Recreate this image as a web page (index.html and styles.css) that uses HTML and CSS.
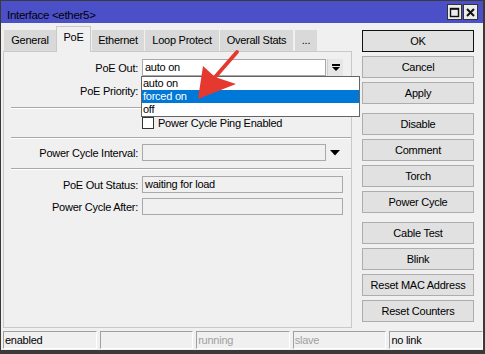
FILE: index.html
```html
<!DOCTYPE html>
<html>
<head>
<meta charset="utf-8">
<link rel="stylesheet" href="styles.css">
</head>
<body>
<div class="win">
  <div class="titlebar">
    <span class="title">Interface &lt;ether5&gt;</span>
    <div class="tbtns">
      <span class="tbtn"><svg width="11" height="11" viewBox="0 0 11 11"><rect x="1.5" y="1.5" width="8" height="8" fill="none" stroke="#111" stroke-width="1.4"/><line x1="1.5" y1="2" x2="9.5" y2="2" stroke="#111" stroke-width="1.6"/></svg></span>
      <span class="tbtn"><svg width="11" height="11" viewBox="0 0 11 11"><path d="M2 2 L9 9 M9 2 L2 9" stroke="#111" stroke-width="2"/></svg></span>
    </div>
  </div>
  <div class="main">
    <div class="left">
      <div class="tabs">
        <div class="tab t1">General</div>
        <div class="tab t2 active">PoE</div>
        <div class="tab t3">Ethernet</div>
        <div class="tab t4">Loop Protect</div>
        <div class="tab t5">Overall Stats</div>
        <div class="tab t6">...</div>
      </div>
      <div class="panel">
        <div class="row r-out">
          <span class="lbl">PoE Out:</span>
          <div class="field white">auto on</div>
          <div class="ddbtn"><svg width="8" height="7" viewBox="0 0 8 7"><rect x="0" y="0" width="8" height="2" fill="#000"/><path d="M0 3 L8 3 L4 7 Z" fill="#000"/></svg></div>
        </div>
        <div class="row r-prio">
          <span class="lbl">PoE Priority:</span>
          <div class="field wide white"></div>
        </div>
        <div class="sep s1"></div>
        <div class="row r-chk">
          <span class="lbl"></span>
          <span class="chk"></span>
          <span>Power Cycle Ping Enabled</span>
        </div>
        <div class="sep s2"></div>
        <div class="row r-int">
          <span class="lbl">Power Cycle Interval:</span>
          <div class="field ro"></div>
          <div class="ddarrow"><svg width="10" height="6" viewBox="0 0 10 6"><path d="M0 0 L10 0 L5 5.5 Z" fill="#000"/></svg></div>
        </div>
        <div class="sep s3"></div>
        <div class="row r-status">
          <span class="lbl">PoE Out Status:</span>
          <div class="field wide ro">waiting for load</div>
        </div>
        <div class="row r-after">
          <span class="lbl">Power Cycle After:</span>
          <div class="field wide ro"></div>
        </div>
        <div class="ddlist">
          <div class="opt">auto on</div>
          <div class="opt sel">forced on</div>
          <div class="opt">off</div>
        </div>
      </div>
    </div>
    <div class="buttons">
      <div class="btn def">OK</div>
      <div class="btn">Cancel</div>
      <div class="btn">Apply</div>
      <div class="btn grp">Disable</div>
      <div class="btn">Comment</div>
      <div class="btn">Torch</div>
      <div class="btn">Power Cycle</div>
      <div class="btn grp">Cable Test</div>
      <div class="btn">Blink</div>
      <div class="btn">Reset MAC Address</div>
      <div class="btn">Reset Counters</div>
    </div>
  </div>
  <div class="status">
    <div class="seg">enabled</div>
    <div class="seg"></div>
    <div class="seg dim">running</div>
    <div class="seg dim">slave</div>
    <div class="seg">no link</div>
  </div>
</div>
<svg class="annot" width="485" height="354" viewBox="0 0 485 354">
  <line x1="237" y1="52" x2="216" y2="76" stroke="#e5392f" stroke-width="3.8" stroke-linecap="round"/>
  <polygon points="198,99 203,66 215,77 236,84" fill="#e5392f"/>
</svg>
</body>
</html>
```

FILE: styles.css
```css
body {
  margin: 0;
  font-family: "Liberation Sans", Arial, sans-serif;
  font-size: 11px;
  letter-spacing: -0.25px;
  color: #000;
  position: relative;
  width: 485px;
  height: 354px;
  overflow: hidden;
}

.win {
  box-sizing: border-box;
  width: 485px;
  height: 354px;
  border: 1px solid #3a3a3a;
  border-right-width: 2px;
  border-bottom-width: 4px;
  padding-bottom: 1px;
  background: #f0f0f0;
  display: flex;
  flex-direction: column;
}

.titlebar {
  height: 22px;
  flex: none;
  background: #4b50c9;
  display: flex;
  justify-content: space-between;
  align-items: flex-start;
  padding-left: 6px;
  padding-right: 5px;
}

.title {
  font-size: 11.5px;
  letter-spacing: -0.3px;
  margin-top: 7px;
  line-height: 14px;
  color: #000;
  white-space: nowrap;
}

.tbtns {
  display: flex;
  gap: 1px;
  margin-top: 3px;
}

.tbtn {
  box-sizing: border-box;
  width: 15px;
  height: 16px;
  border: 1px solid #333;
  background: #ececec;
  display: flex;
  align-items: center;
  justify-content: center;
}

.main {
  height: 308px;
  flex: none;
  display: flex;
  padding-left: 2px;
}

.left {
  width: 349px;
  display: flex;
  flex-direction: column;
  padding-top: 3px;
  padding-bottom: 3px;
  box-sizing: border-box;
}

.tabs {
  height: 25px;
  display: flex;
  align-items: flex-end;
  margin-left: 1px;
  position: relative;
  z-index: 1;
}

.tab {
  box-sizing: border-box;
  height: 21px;
  line-height: 19px;
  text-align: center;
  background: #d9d9d9;
  border: 1px solid #d9d9d9;
  border-bottom: none;
  white-space: nowrap;
}

.tab.active {
  height: 26px;
  margin-bottom: -1px;
  background: #f0f0f0;
  border-color: #c9c9c9;
  line-height: 21px;
}

.t1 { width: 52px; }
.t2 { width: 35px; }
.t3 { width: 52px; margin-left: 1px; }
.t4 { width: 74px; margin-left: 1px; }
.t5 { width: 73px; margin-left: 1px; }
.t6 { width: 22px; margin-left: 2px; }

.panel {
  flex: 1;
  border: 1px solid #c9c9c9;
  position: relative;
  display: flex;
  flex-direction: column;
}

.row {
  display: flex;
  align-items: center;
  height: 17px;
  flex: none;
}

.lbl {
  width: 134px;
  flex: none;
  text-align: right;
  margin-right: 4px;
  white-space: nowrap;
}

.field {
  box-sizing: border-box;
  width: 184px;
  height: 17px;
  border: 1px solid #a9a9a9;
  padding-left: 2px;
  line-height: 15px;
  white-space: nowrap;
  flex: none;
}

.field.wide { width: 201px; }
.field.white { background: #fff; }
.field.ro { background: #f0f0f0; }

.ddbtn {
  box-sizing: border-box;
  width: 16px;
  height: 17px;
  margin-left: 1px;
  background: #e6e6e6;
  border-left: 1px solid #d0d0d0;
  display: flex;
  align-items: center;
  justify-content: center;
}

.ddarrow {
  width: 17px;
  height: 17px;
  display: flex;
  align-items: center;
  justify-content: center;
  padding-left: 1px;
  box-sizing: border-box;
}

.r-out { margin-top: 7px; }
.r-prio { margin-top: 6px; }
.s1 { margin-top: 8px; }
.r-chk { margin-top: 8px; height: 12px; }
.s2 { margin-top: 8px; }
.r-int { margin-top: 5px; }
.s3 { margin-top: 7px; }
.r-status { margin-top: 6px; }
.r-after { margin-top: 5px; }

.sep {
  flex: none;
  margin-left: 7px;
  height: 0;
  border-top: 1px solid #a9a9a9;
  border-bottom: 1px solid #fff;
}

.chk {
  box-sizing: border-box;
  width: 12px;
  height: 12px;
  border: 1px solid #333;
  background: #fff;
  margin-right: 4px;
  flex: none;
}

.ddlist {
  position: absolute;
  left: 137px;
  top: 24px;
  width: 219px;
  box-sizing: border-box;
  border: 1px solid #646464;
  background: #fff;
  z-index: 2;
}

.opt {
  height: 13px;
  line-height: 13px;
  padding-left: 1px;
}

.opt.sel {
  background: #0078d7;
  color: #fff;
}

.buttons {
  margin-left: 10px;
  width: 112px;
  padding-top: 7px;
  display: flex;
  flex-direction: column;
  gap: 4px;
}

.btn {
  box-sizing: border-box;
  height: 22px;
  border: 1px solid #adadad;
  background: #e1e1e1;
  display: flex;
  align-items: center;
  justify-content: center;
  white-space: nowrap;
}

.btn.def { border-color: #111; }
.btn.grp { margin-top: 5px; }

.status {
  height: 18px;
  flex: none;
  display: flex;
  gap: 3px;
  padding-left: 2px;
}

.seg {
  flex: 1;
  box-sizing: border-box;
  border: 1px solid;
  border-color: #a0a0a0 #fff #fff #a0a0a0;
  padding-left: 1px;
  line-height: 16px;
  white-space: nowrap;
}

.seg.dim { color: #a0a0a0; }

.annot {
  position: absolute;
  left: 0;
  top: 0;
  z-index: 5;
  pointer-events: none;
}
```
